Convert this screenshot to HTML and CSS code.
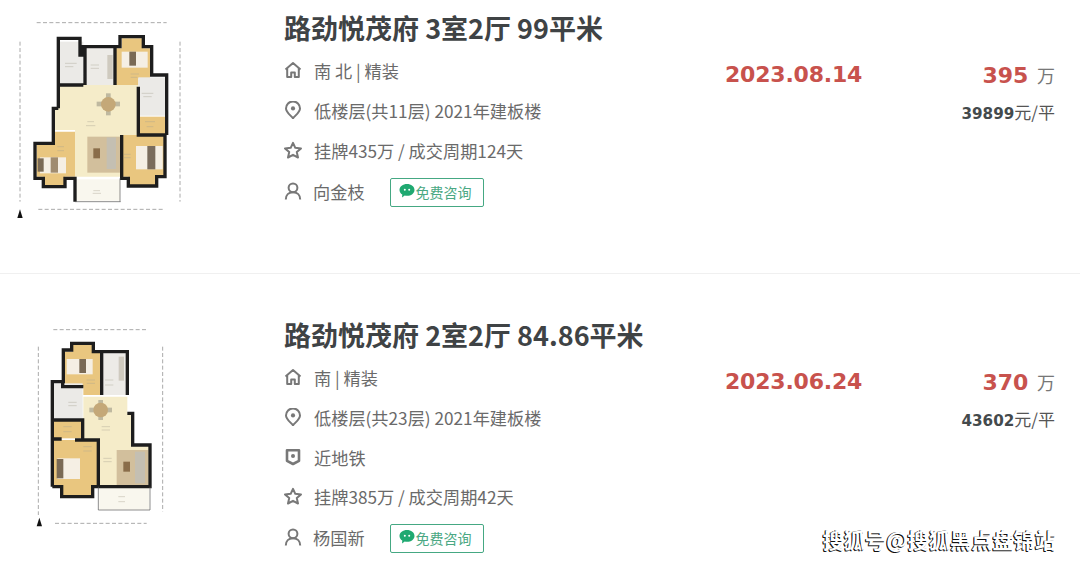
FILE: index.html

```html
<!DOCTYPE html>
<html lang="zh">
<head>
    <meta charset="UTF-8">
    <title>路劲悦茂府 成交记录</title>
    <link rel="stylesheet" href="styles.css">
</head>
<body>
    <svg class="icon-defs" width="0" height="0">
        <symbol id="i-home" viewBox="0 0 18 18"><path d="M1.500 8.400 9 2l7.500 6.400M3.200 7.200V16h4v-4.400h3.600V16h4V7.200" fill="none" stroke="currentColor" stroke-width="2" stroke-linejoin="round"/></symbol>
        <symbol id="i-pin" viewBox="0 0 18 18"><path d="M9 17.200C5.500 13.400 2 10.800 2 7.400a7 7 0 0 1 14 0C16 10.800 12.500 13.400 9 17.200z" fill="none" stroke="currentColor" stroke-width="2"/><circle cx="9" cy="7.400" r="2.100" fill="currentColor"/></symbol>
        <symbol id="i-star" viewBox="0 0 18 18"><path d="M9 1.800l2.300 5 5.700.6-4.200 3.700 1.200 5.400L9 13.800l-5 2.700 1.200-5.400L1 7.400l5.700-.6z" fill="none" stroke="currentColor" stroke-width="2" stroke-linejoin="round"/></symbol>
        <symbol id="i-user" viewBox="0 0 18 18"><circle cx="9" cy="5.800" r="4.400" fill="none" stroke="currentColor" stroke-width="2"/><path d="M1.800 17.500c0-4.300 2.900-7.300 7.200-7.300s7.200 3 7.200 7.300" fill="none" stroke="currentColor" stroke-width="2"/></symbol>
        <symbol id="i-shield" viewBox="0 0 18 18"><path d="M3 2.300h12v10.500L9 16l-6-3.200z" fill="none" stroke="currentColor" stroke-width="2.600" stroke-linejoin="round"/><circle cx="9" cy="8" r="2" fill="currentColor"/></symbol>
        <symbol id="i-chat" viewBox="0 0 16 16"><path d="M8 1c4.100 0 7.500 2.600 7.500 5.900S12.100 12.800 8 12.800c-.8 0-1.600-.1-2.300-.3L3 14.400l.3-2.900C1.500 10.400.5 8.800.5 6.900.5 3.600 3.900 1 8 1z" fill="#1fa971"/><circle cx="5.800" cy="6.800" r="1" fill="#fff"/><circle cx="10.200" cy="6.800" r="1" fill="#fff"/></symbol>
    </svg>

    <div class="listing listing-first">
        <div class="plan plan-a">
            <svg width="200" height="210" viewBox="0 0 600 630">
                <g class="dims">
                    <path d="M110 8H500M115 568H490M60 65V545M540 65V545" />
                </g>
                <polygon fill="#f5ecc9" points="175,195 415,195 415,345 365,345 365,470 225,470 225,330 160,330 160,265 175,265"/>
                <rect fill="#ebeae7" x="180" y="65" width="70" height="130"/>
                <rect fill="#edebe7" x="255" y="85" width="90" height="110"/>
                <polygon fill="#e9c67f" points="345,85 365,85 365,55 430,55 430,85 450,85 450,175 415,175 415,195 345,195"/>
                <rect fill="#ebeae7" x="415" y="172" width="80" height="115"/>
                <rect fill="#e9c67f" x="415" y="290" width="80" height="52"/>
                <polygon fill="#e9c67f" points="365,345 495,345 495,470 470,470 470,498 385,498 385,470 365,470"/>
                <polygon fill="#e9c67f" points="165,335 225,335 225,470 195,470 195,498 130,498 130,470 110,470 110,370 165,370"/>
                <rect fill="#f9f7ee" x="228" y="478" width="132" height="64"/>
                <rect fill="#d2bf9c" x="262" y="350" width="100" height="108"/>
                <rect fill="#c4bfb2" x="320" y="352" width="28" height="95"/>
                <rect fill="#8a6d4a" x="280" y="385" width="20" height="30"/>
                <rect fill="#f5efe4" x="120" y="412" width="78" height="48"/>
                <rect fill="#7a6a55" x="113" y="415" width="18" height="40"/>
                <rect fill="#a08c70" x="152" y="412" width="22" height="46"/>
                <rect fill="#f5efe4" x="408" y="378" width="80" height="70"/>
                <rect fill="#7a6c5c" x="442" y="378" width="24" height="70"/>
                <rect fill="#f5efe4" x="365" y="95" width="78" height="48"/>
                <rect fill="#7a6a55" x="388" y="95" width="20" height="42"/>
                <rect fill="#8a8578" x="290" y="245" width="70" height="14" opacity=".5"/>
                <rect fill="#8a8578" x="318" y="220" width="14" height="66" opacity=".5"/>
                <circle fill="#c4a878" cx="325" cy="253" r="22"/>
                <rect fill="#cfcabf" x="322" y="105" width="16" height="72"/>
                <path class="labels" d="M195 130h35M195 140h25M272 135h25M272 145h25M392 162h25M392 172h20M425 220h35M430 230h25M435 305h30M440 320h20M262 305h20M258 317h28M172 380h20M172 392h20M372 403h20M372 413h20M280 512h20M278 520h25"/>
                <path class="walls" d="M175 265V55H240V105H250V80H360V50H430V80H455V165H500V345M495 345V470H470V498H385V475H365V345M415 200V345H495M345 85V195M255 85V195M180 195H250M105 370H160V265H175M105 365V475H130V500H195V475H225V545"/>
                <path class="walls thin" d="M225 545H362M360 475V545"/>
                <path fill="#111" d="M60 568l8 26H52z"/>
            </svg>
        </div>
        <div class="info">
            <h2>路劲悦茂府 3室2厅 99平米</h2>
            <div class="line"><svg class="icon"><use href="#i-home"/></svg><span>南 北 | 精装</span></div>
            <div class="line"><svg class="icon"><use href="#i-pin"/></svg><span>低楼层(共11层) 2021年建板楼</span></div>
            <div class="line"><svg class="icon"><use href="#i-star"/></svg><span>挂牌435万 / 成交周期124天</span></div>
            <div class="line"><svg class="icon"><use href="#i-user"/></svg><span class="agent">向金枝</span><a class="consult"><svg class="chat"><use href="#i-chat"/></svg>免费咨询</a></div>
        </div>
        <div class="date">2023.08.14</div>
        <div class="price">
            <div class="total"><b>395</b> <span>万</span></div>
            <div class="unit"><b>39899</b>元/平</div>
        </div>
    </div>

    <div class="listing listing-second">
        <div class="plan plan-b">
            <svg width="160" height="220" viewBox="0 0 480 660">
                <g class="dims">
                    <path d="M100 44H385M105 625H380M55 95V600M428 95V590" />
                </g>
                <polygon fill="#f5ecc9" points="190,245 322,245 322,295 338,295 338,390 390,390 390,515 235,515 235,375 190,375"/>
                <polygon fill="#e9c67f" points="130,110 158,110 158,88 218,88 218,110 245,110 245,240 190,240 190,215 130,215"/>
                <rect fill="#edebe7" x="245" y="115" width="76" height="125"/>
                <rect fill="#ebeae7" x="100" y="205" width="88" height="105"/>
                <rect fill="#e9c67f" x="100" y="315" width="88" height="55"/>
                <polygon fill="#e9c67f" points="100,375 235,375 235,515 218,515 218,542 128,542 128,515 100,515"/>
                <rect fill="#f9f7ee" x="238" y="518" width="150" height="66"/>
                <rect fill="#d2bf9c" x="290" y="405" width="95" height="105"/>
                <rect fill="#c4bfb2" x="345" y="410" width="30" height="95"/>
                <rect fill="#8a6d4a" x="310" y="440" width="20" height="30"/>
                <rect fill="#f5efe4" x="112" y="430" width="68" height="62"/>
                <rect fill="#7a6a55" x="110" y="432" width="20" height="58"/>
                <rect fill="#f5efe4" x="140" y="132" width="78" height="46"/>
                <rect fill="#7a6a55" x="178" y="132" width="20" height="42"/>
                <rect fill="#8a8578" x="208" y="278" width="68" height="14" opacity=".5"/>
                <rect fill="#8a8578" x="235" y="255" width="14" height="60" opacity=".5"/>
                <circle fill="#c4a878" cx="242" cy="285" r="22"/>
                <rect fill="#cfcabf" x="296" y="125" width="16" height="72"/>
                <path class="labels" d="M200 195h25M200 205h25M255 195h25M255 210h25M145 262h25M145 272h25M130 335h25M130 350h25M190 395h25M190 408h25M245 335h25M245 345h25M250 430h25M250 440h25M295 545h20M295 560h20"/>
                <path class="walls" d="M97 515V200H130V105H155V85H220V110H322V240M322 295H338V390H390V515H235V375H165M235 515H218V545H125V515H97M128 200V215H190M245 115V240M100 315H188V370M100 372H125"/>
                <path class="walls thin" d="M235 515V585H390V515"/>
                <path fill="#111" d="M58 608l8 26H50z"/>
            </svg>
        </div>
        <div class="info">
            <h2>路劲悦茂府 2室2厅 84.86平米</h2>
            <div class="line"><svg class="icon"><use href="#i-home"/></svg><span>南 | 精装</span></div>
            <div class="line"><svg class="icon"><use href="#i-pin"/></svg><span>低楼层(共23层) 2021年建板楼</span></div>
            <div class="line"><svg class="icon"><use href="#i-shield"/></svg><span>近地铁</span></div>
            <div class="line"><svg class="icon"><use href="#i-star"/></svg><span>挂牌385万 / 成交周期42天</span></div>
            <div class="line"><svg class="icon"><use href="#i-user"/></svg><span class="agent">杨国新</span><a class="consult"><svg class="chat"><use href="#i-chat"/></svg>免费咨询</a></div>
        </div>
        <div class="date">2023.06.24</div>
        <div class="price">
            <div class="total"><b>370</b> <span>万</span></div>
            <div class="unit"><b>43602</b>元/平</div>
        </div>
    </div>

    <div class="watermark">搜狐号@搜狐黑点盘锦站</div>
</body>
</html>
```

FILE: styles.css

```css
html, body {
    height: 564px;
    overflow: hidden;
}
body {
    margin: 0;
    position: relative;
    background: #fff;
    font-family: "Noto Sans CJK SC", "Noto Sans", sans-serif;
    color: #6a6a6a;
}
.icon-defs { position: absolute; }

.listing {
    display: flex;
    box-sizing: border-box;
}
.listing-first {
    height: 274px;
    padding-top: 13px;
    border-bottom: 1px solid #f0f0f0;
}
.listing-second { padding-top: 46px; }

.plan {
    width: 284px;
    flex: none;
}
.plan svg {
    display: block;
    filter: blur(0.7px);
}
.plan-a { margin-top: 7px; }
.plan-b { margin-top: -5px; }
.plan-b svg { margin-left: 20px; }
.dims path {
    fill: none;
    stroke: #aaa;
    stroke-width: 3;
    stroke-dasharray: 12 7;
}
.labels {
    fill: none;
    stroke: #a8a292;
    stroke-width: 2;
    opacity: 0.6;
}
.walls {
    fill: none;
    stroke: #1d1d1d;
    stroke-width: 10;
}
.walls.thin {
    stroke: #555;
    stroke-width: 2;
}

.info {
    width: 441px;
    flex: none;
}
h2 {
    margin: -1px 0 6px;
    font-size: 27px;
    line-height: 32px;
    font-weight: 700;
    color: #3f4345;
}
.line {
    display: flex;
    align-items: center;
    height: 40px;
    font-size: 17.2px;
}
.line:last-child { margin-top: 1px; }
.listing-second .line:nth-child(5) { margin-top: -1px; }
.icon {
    width: 18px;
    height: 18px;
    margin-right: 12px;
    flex: none;
    color: #787878;
}
.agent { margin-left: -1px; }
.consult {
    display: flex;
    align-items: center;
    box-sizing: border-box;
    width: 94px;
    height: 29px;
    margin-left: 25px;
    margin-top: 2px;
    padding-left: 8px;
    border: 1px solid #45a883;
    border-radius: 2px;
    font-size: 14px;
    color: #4aa883;
}
.chat {
    width: 16px;
    height: 16px;
    margin-right: 1px;
    margin-top: -2px;
}

.date {
    width: 137px;
    flex: none;
    padding-top: 50px;
    font-family: "DejaVu Sans", sans-serif;
    font-size: 22px;
    line-height: 24px;
    font-weight: 700;
    letter-spacing: -0.2px;
    color: #c8524d;
    white-space: nowrap;
}
.price {
    width: 193px;
    flex: none;
    padding-top: 50px;
    text-align: right;
}
.total {
    line-height: 24px;
    white-space: nowrap;
}
.total b {
    font-family: "DejaVu Sans", sans-serif;
    font-size: 22px;
    color: #c8524d;
}
.total span {
    margin-left: 5px;
    font-size: 18px;
    color: #777;
}
.unit {
    margin-top: 12px;
    line-height: 24px;
    font-size: 17px;
    color: #555;
}
.unit b {
    font-family: "DejaVu Sans", sans-serif;
    font-size: 15.2px;
    color: #444a4c;
}

.watermark {
    position: absolute;
    right: 24px;
    bottom: 11px;
    font-size: 21px;
    line-height: 28px;
    font-weight: 700;
    letter-spacing: 0.2px;
    color: #fff;
    text-shadow: -1px 1px 0 #111, -1px 0 0 #333;
}
```
